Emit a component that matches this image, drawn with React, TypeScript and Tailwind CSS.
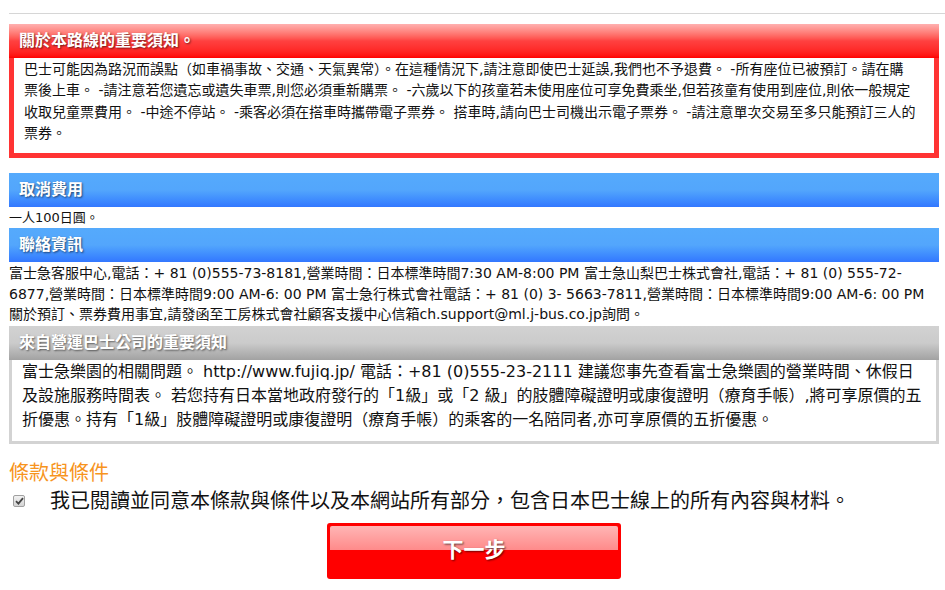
const font = { fontFamily: '"DejaVu Sans", "Noto Sans CJK TC", sans-serif' };

function SectionHead({ title, tone }: { title: string; tone: "red" | "blue" | "gray" }) {
  const bg =
    tone === "red"
      ? "bg-linear-to-b from-[#ffb0b0] via-[#ff4040] to-[#ff0000]"
      : tone === "blue"
        ? "bg-linear-to-b from-[#55aafc] via-[#53a6fc] to-[#3377ff]"
        : "bg-linear-to-b from-[#d2d2d2] via-[#cbcbcb] to-[#a2a2a2]";
  return (
    <div className={`${bg} h-[34px] flex items-center pl-[10px]`}>
      <span className="text-white font-bold text-[16px] [text-shadow:1px_1px_2px_rgba(0,0,0,0.55)]">
        {title}
      </span>
    </div>
  );
}

export default function App() {
  return (
    <div className="min-h-screen bg-white text-[#111]" style={font}>
      <div className="pl-[9px] pt-[13px]">
        {/* divider */}
        <div className="h-px bg-[#d6d6d6]" />

        <div className="w-[930px]">
          {/* Route notice */}
          <div className="mt-[10px]">
            <SectionHead title="關於本路線的重要須知。" tone="red" />
            <div className="border-[5px] border-t-0 border-[#ff3333] pl-[10px] pr-[4px] pt-px pb-[9px] text-[14px] leading-[21.3px]">
              巴士可能因為路況而誤點（如車禍事故、交通、天氣異常）。在這種情況下,請注意即使巴士延誤,我們也不予退費。 -所有座位已被預訂。請在購
              <br />
              票後上車。 -請注意若您遺忘或遺失車票,則您必須重新購票。 -六歲以下的孩童若未使用座位可享免費乘坐,但若孩童有使用到座位,則依一般規定
              <br />
              收取兒童票費用。 -中途不停站。 -乘客必須在搭車時攜帶電子票券。 搭車時,請向巴士司機出示電子票券。 -請注意單次交易至多只能預訂三人的
              <br />
              票券。
            </div>
          </div>

          {/* Cancellation */}
          <div className="mt-[15px]">
            <SectionHead title="取消費用" tone="blue" />
            <p className="text-[13px] leading-[21px]">一人100日圓。</p>
          </div>

          {/* Contact */}
          <div>
            <SectionHead title="聯絡資訊" tone="blue" />
            <p className="text-[14px] leading-[20.6px] pt-px">
              富士急客服中心,電話：+ 81 (0)555-73-8181,營業時間：日本標準時間7:30 AM-8:00 PM 富士急山梨巴士株式會社,電話：+ 81 (0) 555-72-
              <br />
              6877,營業時間：日本標準時間9:00 AM-6: 00 PM 富士急行株式會社電話：+ 81 (0) 3- 5663-7811,營業時間：日本標準時間9:00 AM-6: 00 PM
              <br />
              關於預訂、票券費用事宜,請發函至工房株式會社顧客支援中心信箱ch.support@ml.j-bus.co.jp詢問。
            </p>
          </div>

          {/* Operator notice */}
          <div className="mt-px">
            <SectionHead title="來自營運巴士公司的重要須知" tone="gray" />
            <div className="border-[3px] border-t-0 border-[#d3d3d3] pl-[10px] pr-[1px] pb-[9px] text-[16px] leading-[24px]">
              富士急樂園的相關問題。 http://www.fujiq.jp/ 電話：+81 (0)555-23-2111 建議您事先查看富士急樂園的營業時間、休假日
              <br />
              及設施服務時間表。 若您持有日本當地政府發行的「1級」或「2 級」的肢體障礙證明或康復證明（療育手帳）,將可享原價的五
              <br />
              折優惠。持有「1級」肢體障礙證明或康復證明（療育手帳）的乘客的一名陪同者,亦可享原價的五折優惠。
            </div>
          </div>

          {/* Terms */}
          <h3 className="mt-[16px] text-[20px] leading-[26px] text-[#f7941d]">條款與條件</h3>
          <label className="flex items-center h-[26px] mt-[2px]">
            <span className="ml-[4px] w-[12px] h-[12px] rounded-[2px] border border-[#a0a0a0] bg-linear-to-b from-[#f2f2f2] to-[#d4d4d4] flex items-center justify-center">
              <svg width="9" height="8" viewBox="0 0 9 8">
                <path d="M1 4.2 L3.4 6.6 L8 1.2" fill="none" stroke="#444" strokeWidth="1.8" />
              </svg>
            </span>
            <span className="ml-[25px] text-[20px]">
              我已閱讀並同意本條款與條件以及本網站所有部分，包含日本巴士線上的所有內容與材料。
            </span>
          </label>

          <div className="flex justify-center mt-[9px]">
            <button className="relative w-[294px] h-[56px] rounded-[3px] bg-[#ff0000] flex items-center justify-center">
              <span className="absolute left-[3px] right-[3px] top-[3px] h-[24px] rounded-t-[2px] bg-linear-to-b from-[#ffb5b5] to-[#ff8a8a]" />
              <span className="relative text-white font-bold text-[21px] [text-shadow:1px_1px_2px_rgba(0,0,0,0.6)]">
                下一步
              </span>
            </button>
          </div>
        </div>
      </div>
    </div>
  );
}
